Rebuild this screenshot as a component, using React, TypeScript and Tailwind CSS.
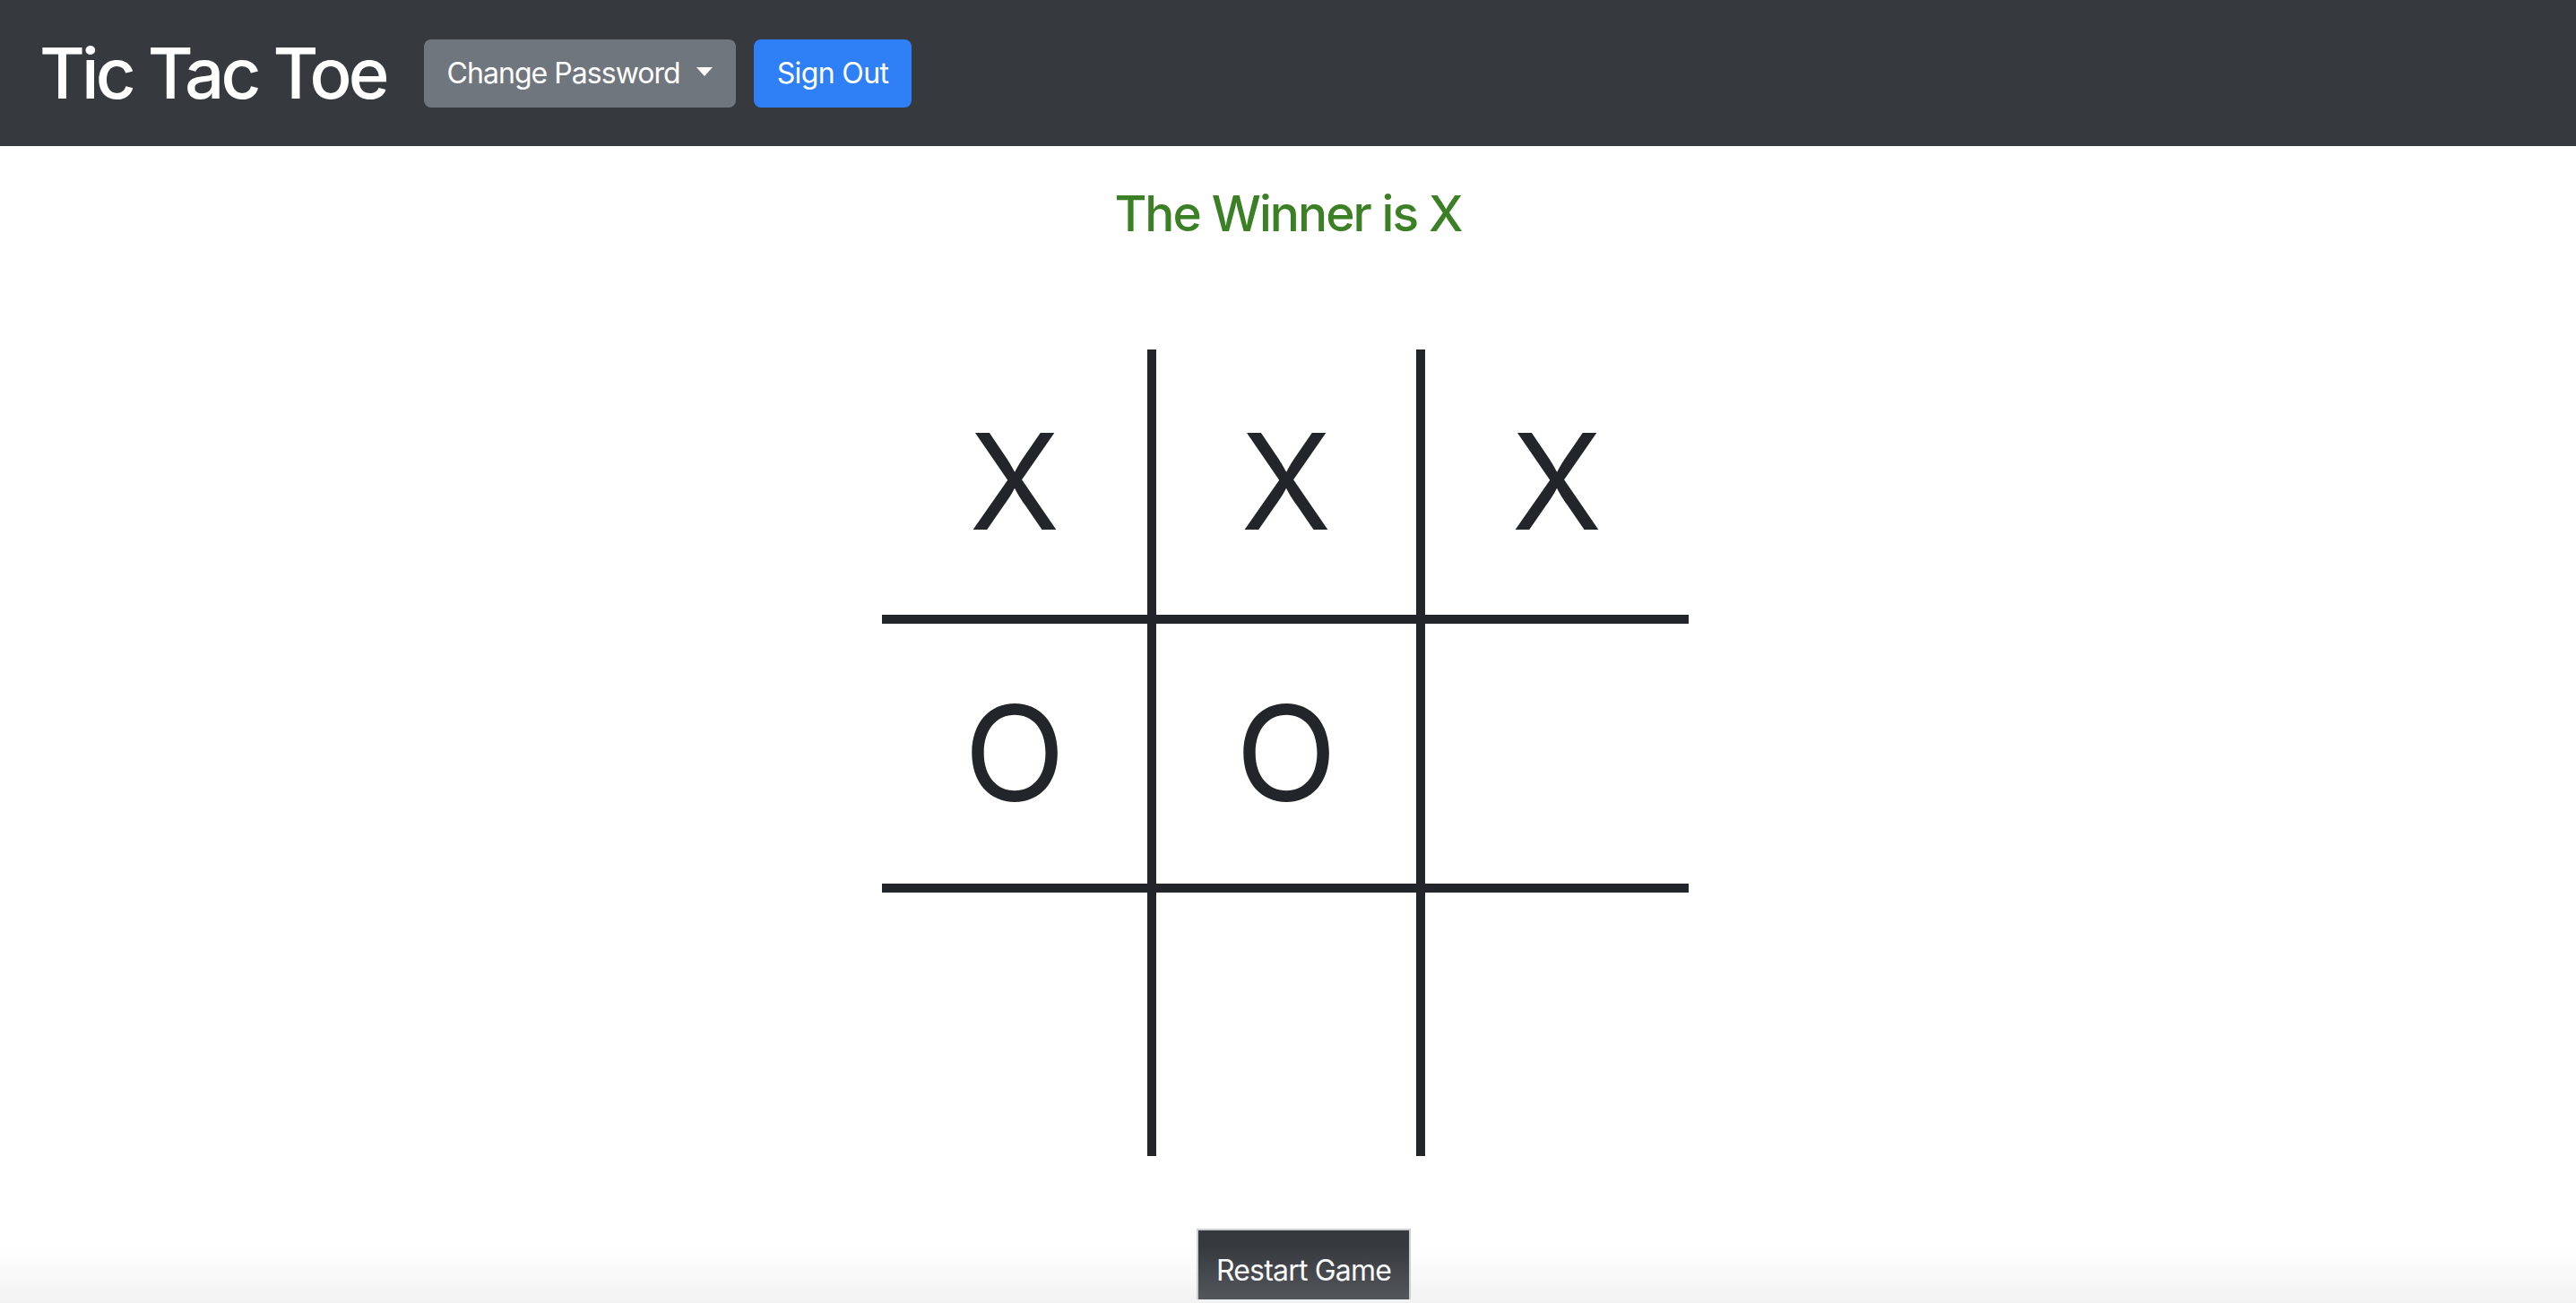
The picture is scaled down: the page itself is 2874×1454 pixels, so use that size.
import { useState } from 'react';

type Mark = 'X' | 'O' | '';

const FONT = "font-['Inter','Liberation_Sans',sans-serif]";

// column / row sizes (content + 10px line) as measured on the board
const cellClasses = [
  'w-[306px] h-[306px] border-r-[10px] border-b-[10px]',
  'w-[300px] h-[306px] border-r-[10px] border-b-[10px]',
  'w-[294px] h-[306px] border-b-[10px]',
  'w-[306px] h-[300px] border-r-[10px] border-b-[10px]',
  'w-[300px] h-[300px] border-r-[10px] border-b-[10px]',
  'w-[294px] h-[300px] border-b-[10px]',
  'w-[306px] h-[294px] border-r-[10px]',
  'w-[300px] h-[294px] border-r-[10px]',
  'w-[294px] h-[294px]',
];

export default function App() {
  const [board] = useState<Mark[]>(['X', 'X', 'X', 'O', 'O', '', '', '', '']);

  return (
    <div className={`relative min-h-[1454px] bg-white text-[#212529] ${FONT}`}>
      {/* Navbar */}
      <nav className="h-[163px] bg-[#363a3f] flex items-center pl-[44px]">
        <h1 className="text-[78px] leading-none font-medium text-white tracking-[-0.05em]">Tic Tac Toe</h1>
        <div className="flex items-center gap-[20px] ml-[42px]">
          <button className="flex items-center h-[76px] px-[26px] rounded-[8px] bg-[#70767e] text-white text-[32px] leading-[48px] tracking-[-0.03em]">
            <span>Change Password</span>
            <span className="ml-[18px] w-0 h-0 border-t-[10px] border-t-white border-x-[9px] border-x-transparent mt-[-4px]"></span>
          </button>
          <button className="h-[76px] px-[26px] rounded-[8px] bg-[#2f7ff6] text-white text-[32px] leading-[48px] tracking-[-0.02em]">
            Sign Out
          </button>
        </div>
      </nav>

      {/* Status */}
      <h3 className="mt-[42px] text-center text-[55px] leading-[67px] font-medium text-[#3b8024] tracking-[-0.035em]">The Winner is X</h3>

      {/* Board */}
      <div className="mt-[118px] flex justify-center pr-[6px]">
        <div className="w-[900px] grid grid-cols-[306px_300px_294px] grid-rows-[306px_300px_294px]">
          {board.map((mark, i) => (
            <div
              key={i}
              className={`${cellClasses[i]} border-[#222529] flex items-center justify-center text-[148px] leading-none text-[#222529]`}
            >
              {mark}
            </div>
          ))}
        </div>
      </div>

      {/* Restart */}
      <div className="mt-[81px] flex justify-center">
        <button className="ml-[35px] pt-[21px] pb-[8px] px-[20px] border-2 border-[#cfcfcf] border-b-0 bg-[#363a3f] text-white text-[32px] leading-[48px] tracking-[-0.025em]">
          Restart Game
        </button>
      </div>

      {/* bottom window fade */}
      <div className="pointer-events-none absolute left-0 right-0 top-[1390px] h-[64px] bg-gradient-to-b from-transparent to-[rgba(196,196,196,0.22)]"></div>
    </div>
  );
}
